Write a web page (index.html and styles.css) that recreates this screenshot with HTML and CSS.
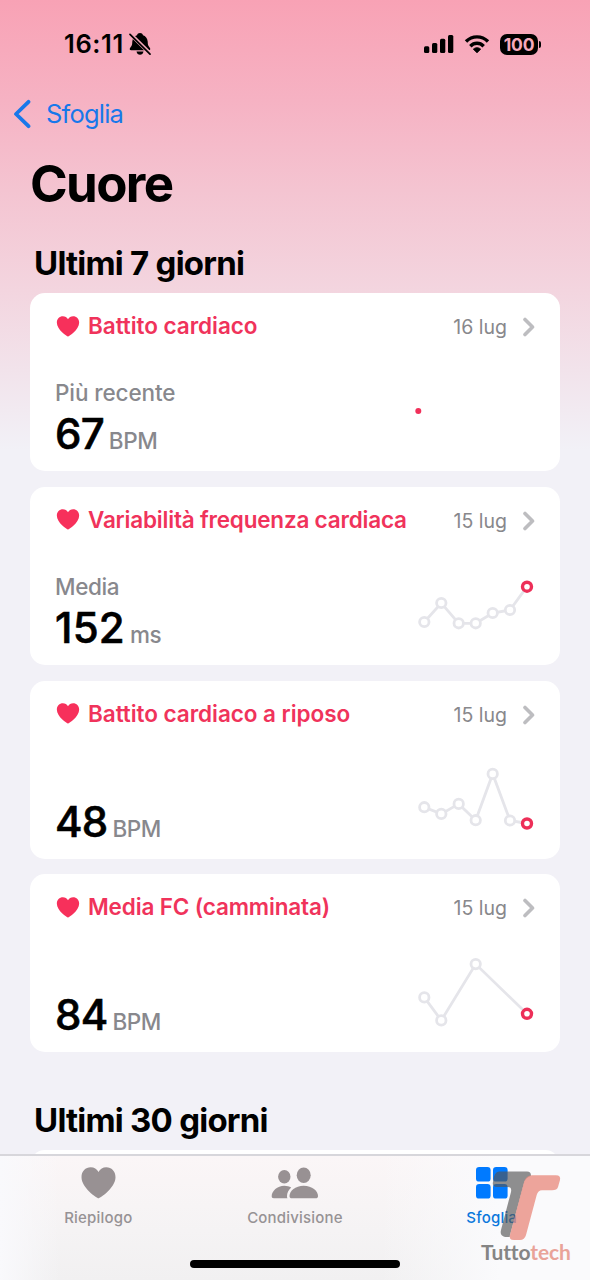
FILE: index.html
```html
<!DOCTYPE html>
<html lang="it">
<head>
<meta charset="utf-8">
<title>Cuore</title>
<link rel="stylesheet" href="styles.css">
</head>
<body>
<svg class="defs" width="0" height="0" aria-hidden="true">
  <symbol id="heart" viewBox="0 0 34 32"><path d="M17 31.2C15.6 31.2 0 20.8 0 10.2C0 4.3 4 .3 9.2.3C12.600.3 15.400 2 17 4.900C18.600 2 21.400.3 24.800.3C30 .3 34 4.300 34 10.200C34 20.800 18.400 31.200 17 31.200Z"/></symbol>
  <symbol id="chevron" viewBox="0 0 14 20"><path d="M3 2.500L10.500 10L3 17.500" fill="none" stroke="currentColor" stroke-width="3.600" stroke-linecap="round" stroke-linejoin="round"/></symbol>
</svg>
<div class="phone">
  <header class="status">
    <div class="clock">
      <span class="time">16:11</span>
      <svg class="bell" viewBox="0 0 22 22"><path d="M2.200 17.200C.4 17.200.3 15.500 1.400 14.400C3.300 12.500 3.100 11.500 3.300 8.500C3.600 5.300 5.500 2.800 8 2.200C8.400.8 9.400 0 11 0S13.600.8 14 2.200C16.500 2.800 18.400 5.300 18.700 8.500C18.900 11.500 18.700 12.500 20.600 14.400C21.700 15.500 21.600 17.200 19.800 17.200Z"/><path d="M7.500 18.500H14.500C14 20.800 12.800 21.800 11 21.800S8 20.800 7.500 18.500Z"/><path class="gap" d="M1.500 1.200L21 20.500"/><path class="slash" d="M1 1.300L21 21.200"/></svg>
    </div>
    <div class="indicators">
      <svg class="signal" viewBox="0 0 30 20"><rect x="0" y="12.300" width="5.300" height="6.700" rx="1.500"/><rect x="8" y="9" width="5.300" height="10" rx="1.500"/><rect x="16" y="4.800" width="5.300" height="14.200" rx="1.500"/><rect x="24" y="1" width="5.300" height="18" rx="1.500"/></svg>
      <svg class="wifi" viewBox="0 0 26 20"><path d="M2 7.500C8.200 1.300 17.800 1.300 24 7.500M6.300 12.200C10.200 8.300 15.800 8.300 19.700 12.200"/><path class="fill" d="M13 18.800L9.300 15.200C11.400 13.200 14.600 13.200 16.700 15.200Z"/></svg>
      <div class="battery"><span class="level">100</span><i class="nub"></i></div>
    </div>
  </header>
  <nav class="back">
    <svg class="back-arrow" viewBox="0 0 18 30"><path d="M15.500 2.800L3 15L15.500 27.200"/></svg>
    <span class="back-label">Sfoglia</span>
  </nav>
  <main>
    <h1>Cuore</h1>
    <h2><span>Ultimi 7 giorni</span></h2>
    <section class="cards">
      <article class="card">
        <div class="head"><svg class="heart"><use href="#heart"/></svg><h3>Battito cardiaco</h3><time>16 lug</time><svg class="chev"><use href="#chevron"/></svg></div>
        <div class="body">
          <div class="reading"><p class="label">Più recente</p><p class="value"><b>67</b><span>BPM</span></p></div>
          <svg class="chart" viewBox="0 0 120 90"><circle class="dot" cx="3.300" cy="48" r="3"/></svg>
        </div>
      </article>
      <article class="card">
        <div class="head"><svg class="heart"><use href="#heart"/></svg><h3 class="t2">Variabilità frequenza cardiaca</h3><time>15 lug</time><svg class="chev"><use href="#chevron"/></svg></div>
        <div class="body">
          <div class="reading"><p class="label l2">Media</p><p class="value wide"><b>152</b><span>ms</span></p></div>
          <svg class="chart" viewBox="0 0 120 90"><polyline points="9.300,65 26.300,46 43.700,66.300 60.700,66.300 77.700,56 95,53 112,29.700"/><circle cx="9.300" cy="65" r="4.700"/><circle cx="26.300" cy="46" r="4.700"/><circle cx="43.700" cy="66.300" r="4.700"/><circle cx="60.700" cy="66.300" r="4.700"/><circle cx="77.700" cy="56" r="4.700"/><circle cx="95" cy="53" r="4.700"/><circle class="last" cx="112" cy="29.700" r="4.500"/></svg>
        </div>
      </article>
      <article class="card">
        <div class="head"><svg class="heart"><use href="#heart"/></svg><h3>Battito cardiaco a riposo</h3><time>15 lug</time><svg class="chev"><use href="#chevron"/></svg></div>
        <div class="body">
          <div class="reading"><p class="value"><b>48</b><span>BPM</span></p></div>
          <svg class="chart" viewBox="0 0 120 90"><polyline points="9.300,56.200 26.300,62.900 43.700,52.900 60.700,69.200 77.700,22.900 95,69.500 112,72.500"/><circle cx="9.300" cy="56.200" r="4.700"/><circle cx="26.300" cy="62.900" r="4.700"/><circle cx="43.700" cy="52.900" r="4.700"/><circle cx="60.700" cy="69.200" r="4.700"/><circle cx="77.700" cy="22.900" r="4.700"/><circle cx="95" cy="69.500" r="4.700"/><circle class="last" cx="112" cy="72.500" r="4.500"/></svg>
        </div>
      </article>
      <article class="card">
        <div class="head"><svg class="heart"><use href="#heart"/></svg><h3 class="t4">Media FC (camminata)</h3><time>15 lug</time><svg class="chev"><use href="#chevron"/></svg></div>
        <div class="body">
          <div class="reading"><p class="value"><b>84</b><span>BPM</span></p></div>
          <svg class="chart" viewBox="0 0 120 90"><polyline points="9.300,53.400 26.300,76.400 60.700,20.100 112,69.800"/><circle cx="9.300" cy="53.400" r="4.700"/><circle cx="26.300" cy="76.400" r="4.700"/><circle cx="60.700" cy="20.100" r="4.700"/><circle class="last" cx="112" cy="69.800" r="4.500"/></svg>
        </div>
      </article>
    </section>
    <h2 class="later"><span>Ultimi 30 giorni</span></h2>
    <article class="card"></article>
  </main>
  <footer class="tabbar">
    <div class="tabs">
      <div class="tab"><svg class="tab-heart"><use href="#heart"/></svg><span>Riepilogo</span></div>
      <div class="tab"><svg class="people" viewBox="0 0 48 32"><ellipse cx="13.300" cy="9.700" rx="6.200" ry="6.800"/><ellipse cx="32.700" cy="8.300" rx="7" ry="7.700"/><path d="M2.800 31.300C1.300 31.300.7 30.500.7 29.300C.7 24 6.300 18.700 13.300 18.700C16 18.700 18.300 19.400 20.200 20.500C17.500 22.800 16 26 16 29.200C16 30 16.200 30.700 16.500 31.300Z"/><path d="M21 31.300C19.300 31.300 18.500 30.500 18.500 29C18.500 24 24.300 18.700 32.700 18.700S47 24 47 29C47 30.500 46.200 31.300 44.500 31.300Z"/></svg><span>Condivisione</span></div>
      <div class="tab active"><svg class="grid" viewBox="0 0 32 32"><rect width="14.600" height="14.600" rx="3.200"/><rect x="17" width="14.600" height="14.600" rx="3.200"/><rect y="17" width="14.600" height="14.600" rx="3.200"/><rect x="17" y="17" width="14.600" height="14.600" rx="3.200"/></svg><span>Sfoglia</span></div>
    </div>
    <div class="home"></div>
  </footer>
  <div class="watermark">
    <svg class="mark" viewBox="0 0 70 72"><path class="dark" d="M8 1.500H36Q40 1.500 40 5.700Q34.500 7.500 33 13L19 65Q18.700 66 18.800 67H14Q8.500 66 10 60L20 22Q21 17 17 17H5Q1 16 2 12Q3 1.500 8 1.500Z"/><path class="salmon" d="M41 5.200H65Q70 5.200 69 10L67 17Q66 20.300 61 20.300H51Q47 20.300 45.700 25L35 65Q33.500 70 29 70H23Q17.500 70 19 65L33 12Q35 5.200 41 5.200Z"/></svg>
    <div class="brand"><span class="tutto">Tutto</span><span class="tech">tech</span></div>
  </div>
</div>
</body>
</html>
```
FILE: styles.css
```css
* { box-sizing: border-box; margin: 0; padding: 0; }
body { font-family: Inter, "Liberation Sans", sans-serif; }
svg { display: block; flex: none; }
.defs { position: absolute; }
.phone {
  position: relative; width: 590px; height: 1280px; overflow: hidden; color: #000;
  background: linear-gradient(#f8a2b5 0, #f6b2c3 100px, #f4c4d1 190px, #f3d5df 290px, #f2e3eb 370px, #f2f1f7 450px);
}
.status { display: flex; justify-content: space-between; height: 88px; padding: 0 49px 0 64px; align-items: center; }
.clock { display: flex; align-items: center; gap: 5px; }
.time { font-size: 25.500px; font-weight: 570; letter-spacing: .600px; line-height: 30px; width: 60px; white-space: nowrap; }
.bell { width: 22px; height: 22px; }
.gap { stroke: #f6a8ba; stroke-width: 3.800; }
.slash { stroke: #000; stroke-width: 1.700; stroke-linecap: round; }
.indicators { display: flex; align-items: center; }
.signal { width: 30px; height: 20px; margin-right: 10px; }
.wifi { width: 26px; height: 20px; margin-right: 10px; fill: none; stroke: #000; stroke-width: 3.400; }
.wifi .fill { fill: #000; stroke: #000; stroke-width: .8; }
.battery { display: flex; align-items: center; gap: 1px; }
.level { width: 38px; height: 21px; border-radius: 7px; background: #000; color: #f6a9bb; font-size: 17.500px; line-height: 21px; font-weight: 650; text-align: center; letter-spacing: -.2px; }
.nub { width: 2px; height: 7px; border-radius: 0 3px 3px 0; background: #000; }
.back { display: flex; align-items: center; height: 52px; padding-left: 13px; color: #1878ea; }
.back-arrow { width: 18px; height: 30px; fill: none; stroke: currentColor; stroke-width: 3.800; stroke-linecap: round; stroke-linejoin: round; }
.back-label { margin-left: 15px; font-size: 25.500px; line-height: 32px; letter-spacing: -0.800px; }
main { padding: 0 30px; }
h1 { height: 88px; line-height: 88px; font-size: 51px; font-weight: 680; letter-spacing: -1.650px; }
h2 { height: 65px; padding: 15px 0 0 4px; line-height: 40px; font-size: 33px; font-weight: 650; letter-spacing: -0.770px; white-space: nowrap; }
.cards { display: flex; flex-direction: column; gap: 15.800px; }
.card { height: 178px; border-radius: 15px; background: #fff; padding: 0 25px 0 25px; }
.head { display: flex; align-items: center; height: 70px; padding: 0 0 4px 1px; }
.heart { width: 24px; height: 21px; fill: #f7305b; margin-right: 8px; }
h3 { flex: 1; font-size: 22.500px; font-weight: 590; line-height: 28px; color: #f0335b; white-space: nowrap; letter-spacing: -.050px; }
.t2 { letter-spacing: -.200px; }
.t4 { letter-spacing: -.150px; }
time { font-size: 19.500px; line-height: 26px; color: #88888c; padding-top: 2px; white-space: nowrap; }
.chev { width: 14px; height: 20px; color: #bdbdc0; margin: 2px -1px 0 15px; }
.body { display: flex; justify-content: space-between; }
.reading { display: flex; flex-direction: column; justify-content: flex-end; height: 98px; }
.label { font-size: 22.500px; line-height: 28px; font-weight: 450; color: #88888d; letter-spacing: -.100px; }
.l2 { letter-spacing: -.400px; }
.value { display: flex; align-items: baseline; height: 54px; line-height: 54px; gap: 5px; }
.value b { font-size: 42px; font-weight: 550; letter-spacing: -.800px; -webkit-text-stroke: .6px #000; stroke-linejoin: round; }
.wide b { letter-spacing: .200px; }
.value span { font-size: 22.500px; font-weight: 450; color: #88888d; letter-spacing: -.400px; }
.chart { width: 120px; height: 90px; fill: #fff; stroke: #e5e5ea; stroke-width: 2.800; }
.chart polyline { fill: none; }
.chart .last { stroke: #ed2f58; stroke-width: 3.400; }
.chart .dot { fill: #f1305a; stroke: none; }
.later { height: 98px; padding-top: 48px; }
.tabbar {
  position: absolute; left: 0; bottom: 0; width: 590px; height: 126px; border-top: 2px solid #d7d6db;
  background: linear-gradient(90deg, #f9f9fc 0, rgba(249,249,252,0) 60px, rgba(249,249,252,0) 380px, #fafafc 500px), linear-gradient(#fbf6f7, #f5f3f4 60%, #f1f0f1);
}
.tabs { display: flex; height: 104px; }
.tab { flex: 1; display: flex; flex-direction: column; align-items: center; padding-top: 11px; color: #969294; fill: #989193; font-size: 15px; font-weight: 450; letter-spacing: .200px; }
.tab span { line-height: 20px; margin-top: 9px; }
.tab-heart { width: 35px; height: 32px; }
.people { width: 48px; height: 32px; }
.grid { width: 32px; height: 32px; }
.active { color: #0b78dc; fill: #007aff; font-weight: 500; }
.home { width: 210px; height: 8px; margin: 0 auto; border-radius: 4px; background: #000; }
.watermark { position: absolute; left: 481px; top: 1170px; width: 90px; }
.mark { width: 70px; height: 72px; margin-left: 10px; }
.dark { fill: #555; fill-opacity: .65; }
.salmon { fill: #e8897c; fill-opacity: .76; }
.brand { display: flex; font-family: Lato, sans-serif; font-size: 21px; line-height: 24px; font-weight: 700; margin-top: -2px; letter-spacing: -.150px; }
.tutto { color: #858585; }
.tech { color: #e9a399; }
```
